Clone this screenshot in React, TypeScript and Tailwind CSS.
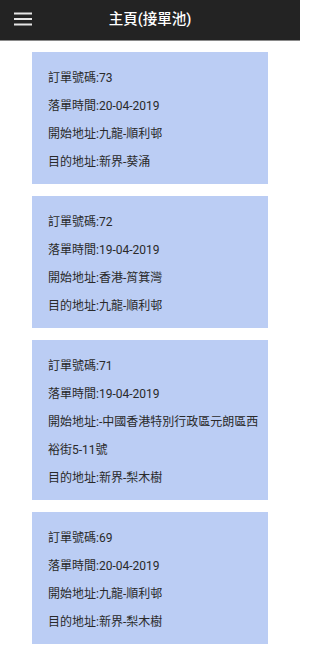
const ORDERS = [
  { id: 73, date: "20-04-2019", from: "九龍-順利邨", to: "新界-葵涌" },
  { id: 72, date: "19-04-2019", from: "香港-筲箕灣", to: "九龍-順利邨" },
  { id: 71, date: "19-04-2019", from: "-中國香港特別行政區元朗區西裕街5-11號", to: "新界-梨木樹" },
  { id: 69, date: "20-04-2019", from: "九龍-順利邨", to: "新界-梨木樹" },
];

function MenuIcon() {
  return (
    <svg width="18" height="14" viewBox="0 0 18 14" className="block">
      <rect x="0" y="0.5" width="18" height="2" fill="#e5e5e5" />
      <rect x="0" y="6" width="18" height="2" fill="#e5e5e5" />
      <rect x="0" y="11.5" width="18" height="2" fill="#e5e5e5" />
    </svg>
  );
}

export default function App() {
  return (
    <div
      className="min-h-[649px] w-[300px] bg-white"
      style={{ fontFamily: 'Roboto, "Noto Sans CJK TC", sans-serif' }}
    >
      <header className="relative flex h-[41px] items-center justify-center border-b border-[#8a8a8a] bg-[#232323]">
        <button className="absolute left-[14px] top-[12px]">
          <MenuIcon />
        </button>
        <h1 className="text-[14.5px] font-medium text-white">主頁(接單池)</h1>
      </header>

      <div className="mx-8 mt-[11px] flex flex-col gap-3">
        {ORDERS.map((o) => (
          <div key={o.id} className="bg-[#bbcdf4] pb-2 pl-4 pr-0 pt-3 text-[12px] leading-[28px] text-[#2a2a2a]">
            <p>訂單號碼:{o.id}</p>
            <p>落單時間:{o.date}</p>
            <p>開始地址:{o.from}</p>
            <p>目的地址:{o.to}</p>
          </div>
        ))}
      </div>
    </div>
  );
}
